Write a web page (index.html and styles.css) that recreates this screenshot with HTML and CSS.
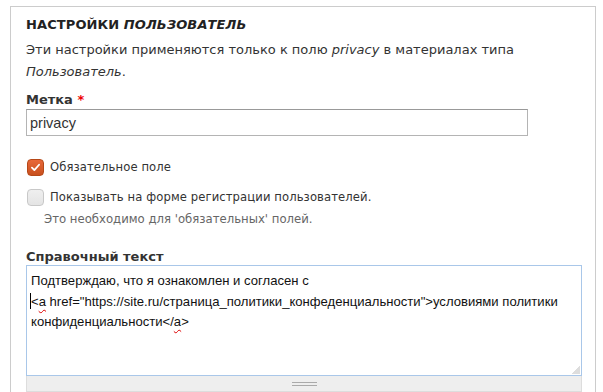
FILE: index.html
```html
<!DOCTYPE html>
<html lang="ru">
<head>
<meta charset="utf-8">
<link rel="stylesheet" href="styles.css">
</head>
<body>
<fieldset class="panel">
  <h2 class="panel-title">Настройки <em>Пользователь</em></h2>
  <p class="panel-desc">Эти настройки применяются только к полю <em>privacy</em> в материалах типа <em>Пользователь</em>.</p>

  <div class="field">
    <label class="field-label">Метка <span class="req">*</span></label>
    <div class="text-input">privacy</div>
  </div>

  <div class="checks">
    <div class="check-row">
      <span class="cbox cbox-on">
        <svg viewBox="0 0 16 16" width="16" height="16"><path d="M3.6 8.2 L6.6 11.2 L12.4 4.6" fill="none" stroke="#fff" stroke-width="2.2" stroke-linecap="round" stroke-linejoin="round"/></svg>
      </span>
      <span class="check-label">Обязательное поле</span>
    </div>
    <div class="check-row">
      <span class="cbox"></span>
      <span class="check-label">Показывать на форме регистрации пользователей.</span>
    </div>
    <div class="check-desc">Это необходимо для 'обязательных' полей.</div>
  </div>

  <div class="field field-help">
    <label class="field-label">Справочный текст</label>
    <div class="area-wrap">
      <div class="area"><div class="area-line">Подтверждаю, что я ознакомлен и согласен с</div><div class="area-line"><span class="caret"></span>&lt;<span class="sq">a</span> href="https://site.ru/страница_политики_конфеденциальности"&gt;условиями политики</div><div class="area-line">конфиденциальности&lt;/<span class="sq">a</span>&gt;</div><span class="resize"></span></div>
      <div class="grippie"><span class="grip"></span></div>
    </div>
  </div>
</fieldset>
</body>
</html>
```
FILE: styles.css
```css
html, body {
  margin: 0;
  padding: 0;
  background: #fff;
}
body {
  font-family: "DejaVu Sans", sans-serif;
  font-size: 13px;
  color: #333;
  overflow: hidden;
  height: 392px;
}
.panel {
  margin: 6px 7px 0 10px;
  border: 1px solid #ccc;
  border-bottom: none;
  padding: 5px 0 0 15px;
  min-width: 0;
  height: 386px;
  box-sizing: border-box;
  overflow: hidden;
}
.panel-title {
  margin: 0;
  padding-top: 2px;
  font-size: 13px;
  font-weight: bold;
  text-transform: uppercase;
  color: #222;
  line-height: 22px;
  letter-spacing: 0.1px;
}
.panel-title em {
  font-style: italic;
}
.panel-desc {
  margin: 3px 0 0 0;
  line-height: 22px;
  color: #333;
  width: 530px;
  font-size: 13px;
}
.field {
  margin-top: 7px;
}
.field-label {
  display: block;
  font-weight: bold;
  color: #333;
  line-height: 20px;
}
.req {
  color: #e00;
}
.text-input {
  width: 502px;
  height: 27px;
  box-sizing: border-box;
  border: 1px solid #b4b4b4;
  border-top-color: #999;
  font-family: "Liberation Sans", Arial, sans-serif;
  font-size: 14.5px;
  color: #333;
  padding: 3px 0 0 3px;
  line-height: 20px;
  margin-top: -1px;
}
.checks {
  margin-top: 22px;
}
.check-row {
  display: flex;
  align-items: center;
  height: 18px;
  margin-bottom: 12px;
}
.cbox {
  width: 15px;
  height: 15px;
  border: 1px solid #c8c8c8;
  border-radius: 4px;
  background: linear-gradient(#efefef, #e4e4e4);
  margin-left: 1px;
  margin-right: 6px;
  display: flex;
  align-items: center;
  justify-content: center;
  flex: none;
}
.cbox-on {
  background: linear-gradient(#e8683a, #c8501e);
  border-color: #b64818;
}
.cbox-on svg {
  width: 13px;
  height: 13px;
}
.check-label {
  color: #333;
  line-height: 18px;
  font-size: 11.6px;
  letter-spacing: 0.1px;
}
.check-desc {
  margin-top: -8px;
  padding-left: 18px;
  font-size: 11.7px;
  color: #666;
  line-height: 18px;
}
.field-help {
  margin-top: 19px;
}
.area-wrap {
  width: 556px;
  margin-top: -2px;
}
.area {
  position: relative;
  height: 111px;
  box-sizing: border-box;
  border: 1px solid #a9c7e9;
  padding: 5px 0 0 4px;
  font-family: "Liberation Sans", Arial, sans-serif;
  font-size: 13.1px;
  color: #111;
  line-height: 20.5px;
}
.area-line {
  white-space: nowrap;
}
.caret {
  display: inline-block;
  width: 1px;
  height: 16px;
  background: #000;
  vertical-align: -3px;
  margin-left: -1px;
}
.sq {
  text-decoration: underline wavy #d00;
  text-decoration-thickness: 1px;
  text-underline-offset: 3px;
}
.resize {
  position: absolute;
  right: 1px;
  bottom: 1px;
  width: 8px;
  height: 8px;
  background: linear-gradient(135deg, transparent 50%, #ddd 50%);
}
.grippie {
  height: 16px;
  background: #eee;
  border: 1px solid #ddd;
  border-top: none;
  display: flex;
  justify-content: center;
  padding-top: 6px;
  box-sizing: border-box;
}
.grip {
  width: 25px;
  height: 4px;
  border-top: 1px solid #aaa;
  border-bottom: 1px solid #aaa;
  box-sizing: border-box;
}
```
